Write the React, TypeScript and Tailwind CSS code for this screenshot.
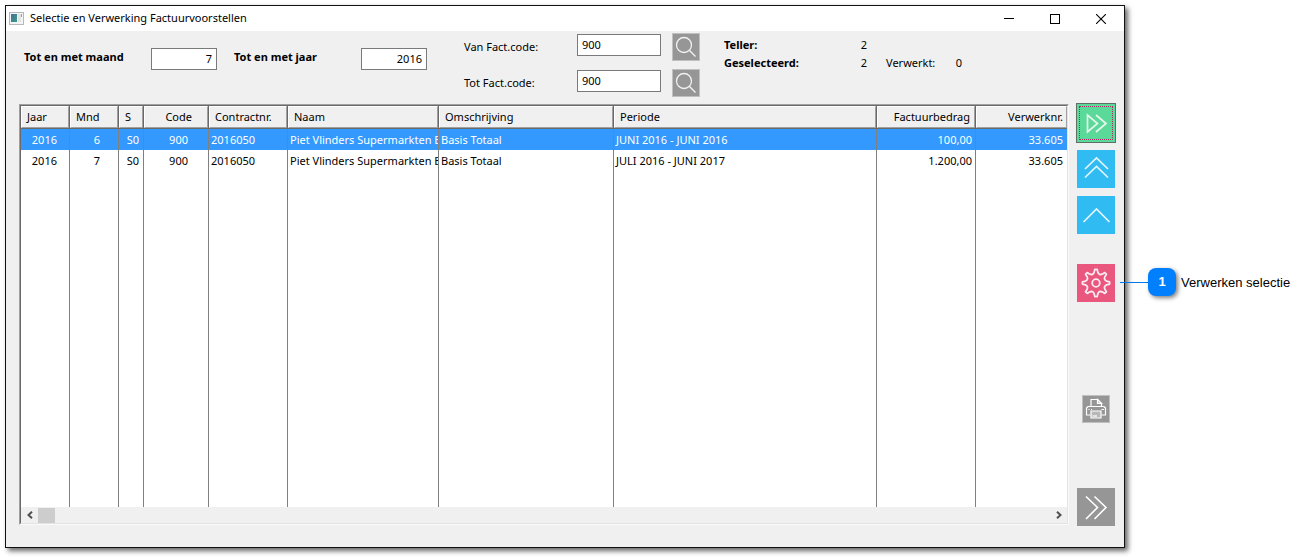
import React from "react";

type Row = {
  jaar: string;
  mnd: string;
  s: string;
  code: string;
  contract: string;
  naam: string;
  omschrijving: string;
  periode: string;
  bedrag: string;
  verwerknr: string;
  selected?: boolean;
};

const rows: Row[] = [
  {
    jaar: "2016", mnd: "6", s: "S0", code: "900", contract: "2016050",
    naam: "Piet Vlinders Supermarkten B", omschrijving: "Basis Totaal",
    periode: "JUNI 2016 - JUNI 2016", bedrag: "100,00", verwerknr: "33.605", selected: true,
  },
  {
    jaar: "2016", mnd: "7", s: "S0", code: "900", contract: "2016050",
    naam: "Piet Vlinders Supermarkten B", omschrijving: "Basis Totaal",
    periode: "JULI 2016 - JUNI 2017", bedrag: "1.200,00", verwerknr: "33.605",
  },
];

const columns: { key: keyof Row; label: string; width: string; head: string; cell: string }[] = [
  { key: "jaar", label: "Jaar", width: "w-[49px]", head: "pl-[5px] text-left", cell: "pr-3 text-right" },
  { key: "mnd", label: "Mnd", width: "w-[49px]", head: "pl-[5px] text-left", cell: "pr-[18px] text-right" },
  { key: "s", label: "S", width: "w-[25px]", head: "pl-[5px] text-left", cell: "pr-1 text-right" },
  { key: "code", label: "Code", width: "w-[65px]", head: "pr-[15px] text-right", cell: "pr-5 text-right" },
  { key: "contract", label: "Contractnr.", width: "w-[79px]", head: "pl-[5px] text-left", cell: "pl-0.5 text-left" },
  { key: "naam", label: "Naam", width: "w-[151px]", head: "pl-[5px] text-left", cell: "pl-0.5 text-left" },
  { key: "omschrijving", label: "Omschrijving", width: "w-[175px]", head: "pl-[5px] text-left", cell: "pl-0.5 text-left" },
  { key: "periode", label: "Periode", width: "w-auto", head: "pl-[5px] text-left", cell: "pl-0.5 text-left" },
  { key: "bedrag", label: "Factuurbedrag", width: "w-[99px]", head: "pr-1 text-right", cell: "pr-[3px] text-right" },
  { key: "verwerknr", label: "Verwerknr.", width: "w-[91px]", head: "pr-[3px] text-right", cell: "pr-1 text-right" },
];

function TitleBar() {
  return (
    <header className="flex h-[25px] items-center bg-white pl-[3px]">
      <svg width="15" height="13" viewBox="0 0 15 13" className="shrink-0" aria-hidden="true">
        <defs>
          <linearGradient id="pane" x1="0" y1="0" x2="1" y2="1">
            <stop offset="0" stopColor="#44719c" />
            <stop offset="1" stopColor="#3a9a80" />
          </linearGradient>
        </defs>
        <rect x="0.5" y="0.5" width="14" height="12" fill="#f3f4f5" stroke="#b4b8bd" />
        <rect x="2" y="2" width="6" height="8" fill="url(#pane)" />
        <rect x="9" y="2" width="3" height="8" fill="#e1e4e6" />
        <rect x="12" y="2" width="1" height="3" fill="#6fb0a2" />
      </svg>
      <h1 className="ml-1.5 flex-1 pb-0.5 text-[11px] leading-4">Selectie en Verwerking Factuurvoorstellen</h1>
      <button type="button" aria-label="Minimaliseren" className="flex h-full w-[46px] items-center justify-center">
        <svg width="10" height="10" shapeRendering="crispEdges"><path d="M0 4.5H10" stroke="#000" /></svg>
      </button>
      <button type="button" aria-label="Maximaliseren" className="flex h-full w-[46px] items-center justify-center">
        <svg width="10" height="10" shapeRendering="crispEdges"><rect x=".5" y=".5" width="9" height="9" fill="none" stroke="#000" /></svg>
      </button>
      <button type="button" aria-label="Sluiten" className="flex h-full w-[46px] items-center justify-center">
        <svg width="10" height="10"><path d="M0 0L10 10M10 0L0 10" stroke="#000" strokeWidth="1.1" /></svg>
      </button>
    </header>
  );
}

function SearchButton({ label }: { label: string }) {
  return (
    <button type="button" aria-label={label} className="ml-[11px] flex size-7 items-center justify-center border border-[#c0c0c0] bg-[#969696]">
      <svg width="26" height="26" viewBox="0 0 26 26" fill="none" stroke="#f2f2f2" strokeWidth="1.3">
        <circle cx="11" cy="11" r="7.5" />
        <path d="M16.3 16.3L22.5 22.5" />
      </svg>
    </button>
  );
}

function Filters() {
  const box = "h-[22px] border border-[#7a7a7a] bg-white px-1 pb-0.5 text-[11px] leading-4 outline-none";
  return (
    <form className="flex h-[73px] items-start pl-[18px]" onSubmit={(e) => e.preventDefault()}>
      <div className="flex items-center pt-[17px]">
        <label htmlFor="maand" className="w-[127px] text-[11px] font-bold leading-4 -mt-1">Tot en met maand</label>
        <input id="maand" defaultValue="7" className={box + " w-[66px] text-right"} />
      </div>
      <div className="flex items-center pt-[17px] pl-[17px]">
        <label htmlFor="jaar" className="w-[127px] text-[11px] font-bold leading-4 -mt-1">Tot en met jaar</label>
        <input id="jaar" defaultValue="2016" className={box + " w-[66px] text-right"} />
      </div>
      <div className="flex flex-col gap-2 pl-[37px] pt-0.5">
        <div className="flex items-center">
          <label htmlFor="van" className="w-[113px] text-[11px] leading-4">Van Fact.code:</label>
          <input id="van" defaultValue="900" className={box + " w-[84px] -mt-1"} />
          <SearchButton label="Zoek van factuurcode" />
        </div>
        <div className="flex items-center">
          <label htmlFor="tot" className="w-[113px] text-[11px] leading-4">Tot Fact.code:</label>
          <input id="tot" defaultValue="900" className={box + " w-[84px] -mt-1"} />
          <SearchButton label="Zoek tot factuurcode" />
        </div>
      </div>
      <dl className="grid grid-cols-[132px_11px_73px_22px] gap-y-0.5 pl-6 pt-1.5 text-[11px] leading-4">
        <dt className="font-bold">Teller:</dt>
        <dd className="text-right">2</dd>
        <dt className="col-start-1 font-bold">Geselecteerd:</dt>
        <dd className="text-right">2</dd>
        <dt className="pl-[19px]">Verwerkt:</dt>
        <dd className="text-right">0</dd>
      </dl>
    </form>
  );
}

function ProposalTable() {
  return (
    <div className="flex min-w-0 flex-1 flex-col border border-t-[#a0a0a0] border-l-[#a0a0a0] border-r-[#fafafa] border-b-[#fafafa]">
      <div className="flex min-h-0 flex-1 flex-col border border-t-[#696969] border-l-[#696969] border-r-[#e3e3e3] border-b-[#e3e3e3] bg-white">
        <table className="w-full flex-1 table-fixed border-separate border-spacing-0 text-[11px] leading-4">
          <thead>
            <tr className="h-[23px]">
              {columns.map((c) => (
                <th key={c.key} scope="col" className={c.width + " border-b border-r border-[#696969] p-0 font-normal last:border-r-0"}>
                  <div className={"h-[22px] border border-t-white border-l-white border-r-[#a0a0a0] border-b-[#a0a0a0] bg-[#f0f0f0] pt-0.5 whitespace-nowrap " + c.head}>
                    {c.label}
                  </div>
                </th>
              ))}
            </tr>
          </thead>
          <tbody>
            {rows.map((r, i) => (
              <tr key={i} className={r.selected ? "h-[21px] bg-[#3399ff] text-white" : "h-[21px]"}>
                {columns.map((c) => (
                  <td key={c.key} className={"overflow-hidden whitespace-nowrap border-r border-[#808080] py-0 pl-0 last:border-r-0 " + c.cell}>
                    {r[c.key]}
                  </td>
                ))}
              </tr>
            ))}
            <tr className="h-[336px]">
              {columns.map((c) => (
                <td key={c.key} className="border-r border-[#808080] p-0 last:border-r-0" />
              ))}
            </tr>
          </tbody>
        </table>
        <div className="flex h-4 shrink-0 items-center bg-[#f0f0f0]">
          <button type="button" aria-label="Naar links" className="flex h-4 w-[17px] items-center justify-center">
            <svg width="8" height="8" fill="none" stroke="#505050" strokeWidth="2"><path d="M6 .8L2.5 4L6 7.2" /></svg>
          </button>
          <div className="flex-1"><div className="h-[15px] w-[17px] bg-[#cdcdcd]" /></div>
          <button type="button" aria-label="Naar rechts" className="flex h-4 w-[17px] items-center justify-center">
            <svg width="8" height="8" fill="none" stroke="#505050" strokeWidth="2"><path d="M2 .8L5.5 4L2 7.2" /></svg>
          </button>
        </div>
      </div>
    </div>
  );
}

function gearPath() {
  const c = 15;
  const pts: string[] = [];
  const at = (r: number, deg: number) => {
    const a = (deg * Math.PI) / 180;
    return (c + r * Math.sin(a)).toFixed(2) + " " + (c - r * Math.cos(a)).toFixed(2);
  };
  for (let i = 0; i < 8; i++) {
    const d = i * 45;
    pts.push((i === 0 ? "M" : "L") + at(10.8, d - 10));
    pts.push("L" + at(13.6, d - 5));
    pts.push("L" + at(13.6, d + 5));
    pts.push("L" + at(10.8, d + 10));
    pts.push("Q" + at(8.2, d + 22.5) + " " + at(10.8, d + 35));
  }
  return pts.join("") + "Z";
}

function Actions() {
  const tile = "flex size-[38px] items-center justify-center";
  return (
    <nav aria-label="Acties" className="flex w-10 shrink-0 flex-col items-center">
      <button type="button" aria-label="Start selectie" className="-mt-px flex size-10 items-center justify-center border border-[#5f6f66] bg-[#5bd999] p-0.5">
        <span className="flex size-[34px] items-center justify-center border border-dotted border-[#b0286a]">
          <svg width="32" height="32" viewBox="0 0 32 32" fill="none" stroke="#e6f7ee" strokeWidth="1.7">
            <path d="M7.5 8V25L17.5 16.5Z" />
            <path d="M16 8L26 16.5L16 25" />
          </svg>
        </span>
      </button>
      <button type="button" aria-label="Alles selecteren" className={tile + " mt-[7px] bg-[#30bcf3]"}>
        <svg width="38" height="38" fill="none" stroke="#e4f5fd" strokeWidth="1.7"><path d="M8 19L19.5 8L31 19M8 27.5L19.5 16.5L31 27.5" /></svg>
      </button>
      <button type="button" aria-label="Selecteren" className={tile + " mt-2 bg-[#30bcf3]"}>
        <svg width="38" height="38" fill="none" stroke="#e4f5fd" strokeWidth="1.7"><path d="M6.5 26L19.5 13L32.5 26" /></svg>
      </button>
      <button type="button" aria-label="Verwerken selectie" className={tile + " mt-[30px] bg-[#e9567e]"}>
        <svg width="30" height="30" viewBox="0 0 30 30" fill="none" stroke="#fdeaf0" strokeWidth="1.8" strokeLinejoin="round">
          <path d={gearPath()} />
          <circle cx="15" cy="15" r="3.8" />
        </svg>
      </button>
      <button type="button" aria-label="Afdrukken" className="mt-[93px] flex size-7 items-center justify-center border border-[#c0c0c0] bg-[#969696]">
        <svg width="26" height="26" viewBox="0 0 26 26" fill="none" stroke="#fff" strokeWidth="1.2">
          <path d="M8 10.5V3.5H14.5L18.5 7.5V10.5" />
          <path d="M14.5 3.5V7.5H18.5Z" fill="#c8c8c8" />
          <path d="M7.5 19H3.5V12L5 10.5H21L22.5 12V19H18.5" />
          <path d="M5.5 13.5H6.5M8 13.5H9M18.5 13.5H21" />
          <path d="M8 15H18V22H8Z" fill="#b8b8b8" />
          <path d="M9.5 20H14" />
        </svg>
      </button>
      <button type="button" aria-label="Sluiten en verder" className={tile + " mt-[65px] bg-[#969696]"}>
        <svg width="38" height="38" fill="none" stroke="#fff" strokeWidth="1.6"><path d="M9 8.5L20.5 19.5L9 31M17.5 8.5L29 19.5L17.5 31" /></svg>
      </button>
    </nav>
  );
}

export default function App() {
  return (
    <div className="flex min-h-screen items-start bg-white pb-[9px] pl-[5px] pt-[5px] font-['Noto_Sans','Open_Sans',sans-serif] text-black">
      <main className="min-w-0 flex-1 border border-[#111] bg-[#f0f0f0] shadow-[3px_3px_5px_rgba(0,0,0,0.6)]">
        <TitleBar />
        <Filters />
        <div className="flex items-start gap-[7px] pb-[21px] pl-[13px] pr-2">
          <ProposalTable />
          <Actions />
        </div>
      </main>
      <aside className="z-10 -ml-[5px] mt-[263px] flex w-[186px] shrink-0 items-center">
        <span className="h-px w-7 bg-[#0078e8]" />
        <span className="flex size-7 items-center justify-center rounded-lg bg-[#0080ff] font-['Liberation_Sans',sans-serif] text-[13px] font-bold text-white shadow-[2px_2px_4px_rgba(0,0,0,0.5)]">1</span>
        <span className="ml-[5px] whitespace-nowrap pt-0.5 font-['Liberation_Sans',sans-serif] text-[13px] leading-4">Verwerken selectie</span>
      </aside>
    </div>
  );
}
